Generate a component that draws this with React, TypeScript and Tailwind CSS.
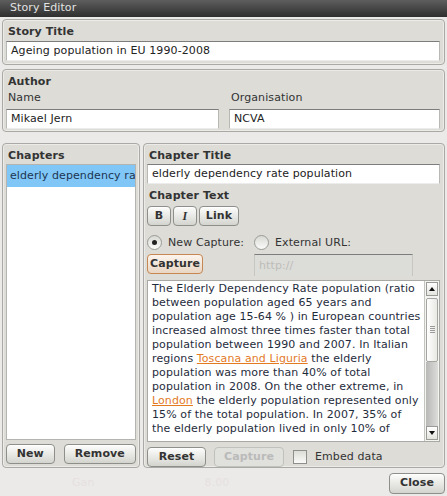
import React from "react";

const btn =
  "h-[20px] rounded-[4px] border border-[#8e8e8a] bg-linear-to-b from-[#fdfdfc] to-[#d4d4cf] text-[11px] font-bold text-[#333] flex items-center justify-center shadow-[inset_0_1px_0_#fff]";

const input =
  "h-[20px] bg-white border border-t-[#7d7d7d] border-x-[#b8b8b4] border-b-[#ececec] px-[4px] flex items-center text-[11px] text-[#222] whitespace-nowrap overflow-hidden";

const panel = "rounded-[4px] border border-[#a9a9a5] bg-[#dddcd7] shadow-[inset_0_0_0_1px_#ecebe7]";

function Radio({ checked }: { checked?: boolean }) {
  return (
    <span className="w-[15px] h-[15px] rounded-full border border-[#9a9a96] bg-linear-to-b from-[#d8d8d4] to-[#fbfbfa] flex items-center justify-center">
      {checked && <span className="w-[5px] h-[5px] rounded-full bg-[#222]" />}
    </span>
  );
}

function Scrollbar() {
  return (
    <div className="w-[15px] h-full flex flex-col border-l border-[#c4c4c0] bg-[#f4f4f2]">
      <div className="h-[14px] mt-[1px] mx-[1px] border border-[#9a9a96] bg-linear-to-b from-white to-[#e4e4e0] flex items-center justify-center">
        <span className="w-0 h-0 border-x-[3px] border-x-transparent border-b-[4px] border-b-[#111]" />
      </div>
      <div className="h-[64px] mx-[1px] mt-[2px] rounded-[2px] border border-[#a4a4a0] bg-linear-to-r from-white to-[#e8e8e4] flex flex-col items-center justify-center gap-[1px]">
        <span className="w-[5px] h-px bg-[#9a9a9a]" />
        <span className="w-[5px] h-px bg-[#9a9a9a]" />
        <span className="w-[5px] h-px bg-[#9a9a9a]" />
        <span className="w-[5px] h-px bg-[#9a9a9a]" />
      </div>
      <div className="flex-1 mx-[1px] bg-linear-to-r from-[#b8b8b6] to-[#dcdcda]" />
      <div className="h-[14px] mb-[1px] mx-[1px] border border-[#9a9a96] bg-linear-to-b from-white to-[#e4e4e0] flex items-center justify-center">
        <span className="w-0 h-0 border-x-[3px] border-x-transparent border-t-[4px] border-t-[#111]" />
      </div>
    </div>
  );
}

const link = "text-[#e37a1f] underline";

export default function App() {
  return (
    <div className="w-[447px] h-[496px] overflow-hidden bg-[#ebeae8] font-['DejaVu_Sans',Verdana,sans-serif] text-[11px] tracking-[0.1px] text-[#333] flex flex-col">
      <div className="h-[17px] shrink-0 pl-[10px] flex items-center bg-linear-to-b from-[#5e5e5e] to-[#2f2f2f] text-[#e2e2e2] text-[11px]">
        Story Editor
      </div>

      <div className="px-[2px] pt-[2px] flex flex-col">
        {/* story title */}
        <div className={`${panel} h-[46px] pt-[5px] pl-[3px] pr-[4px] flex flex-col`}>
          <div className="h-[13px] leading-[13px] font-bold pl-[2px]">Story Title</div>
          <div className={`${input} mt-[3px]`}>Ageing population in EU 1990-2008</div>
        </div>

        {/* author */}
        <div className={`${panel} mt-[4px] h-[63px] pt-[5px] pl-[3px] pr-[4px] flex flex-col`}>
          <div className="h-[13px] leading-[13px] font-bold pl-[2px]">Author</div>
          <div className="flex gap-[10px] mt-[3px]">
            <div className="w-[213px] flex flex-col">
              <div className="h-[13px] leading-[13px] pl-[2px]">Name</div>
              <div className={`${input} mt-[5px]`}>Mikael Jern</div>
            </div>
            <div className="flex-1 flex flex-col">
              <div className="h-[13px] leading-[13px] pl-[2px]">Organisation</div>
              <div className={`${input} mt-[5px]`}>NCVA</div>
            </div>
          </div>
        </div>

        {/* chapters */}
        <div className="mt-[11px] h-[325px] flex gap-[3px]">
          <div className={`${panel} w-[138px] pt-[5px] pl-[3px] pr-[3px] flex flex-col`}>
            <div className="h-[13px] leading-[13px] font-bold pl-[2px]">Chapters</div>
            <div className="mt-[2px] h-[276px] bg-white border border-[#b4b4b0] overflow-hidden">
              <div className="h-[22px] bg-[#80c6f6] pl-[3px] flex items-center text-[#1c3552] whitespace-nowrap overflow-hidden">
                elderly dependency ra
              </div>
            </div>
            <div className="mt-[4px] flex gap-[9px]">
              <div className={`${btn} w-[49px]`}>New</div>
              <div className={`${btn} w-[73px]`}>Remove</div>
            </div>
          </div>

          <div className={`${panel} flex-1 pt-[5px] pl-[3px] pr-[4px] flex flex-col`}>
            <div className="h-[13px] leading-[13px] font-bold pl-[2px]">Chapter Title</div>
            <div className={`${input} mt-[2px]`}>elderly dependency rate population</div>
            <div className="h-[13px] leading-[13px] font-bold pl-[2px] mt-[5px]">Chapter Text</div>
            <div className="mt-[4px] flex gap-[2px]">
              <div className={`${btn} w-[24px] h-[17px]`}>B</div>
              <div className={`${btn} w-[24px] h-[17px]`}>
                <span className="font-['Liberation_Serif',serif] italic text-[12px]">I</span>
              </div>
              <div className={`${btn} w-[40px] h-[17px]`}>Link</div>
            </div>
            <div className="mt-[9px] flex items-center h-[16px]">
              <div className="w-[107px] flex items-center gap-[6px]">
                <Radio checked />
                <span>New Capture:</span>
              </div>
              <div className="flex items-center gap-[6px]">
                <Radio />
                <span>External URL:</span>
              </div>
            </div>
            <div className="mt-[3px] flex h-[22px]">
              <div className="w-[107px]">
                <div className="w-[56px] h-[20px] rounded-[4px] border border-[#c78752] bg-linear-to-b from-[#fcf5ee] to-[#e9d6c4] flex items-center justify-center font-bold text-[#333]">
                  Capture
                </div>
              </div>
              <div className="w-[159px] h-[22px] bg-[#dcdcd8] border-t border-t-[#7d7d7d] border-x border-x-[#c6c6c2] pl-[4px] pt-[3px] text-[#bdbdb9]">
                http://
              </div>
            </div>
            <div className="mt-[4px] h-[163px] bg-white border border-[#a8a8a4] flex overflow-hidden">
              <div className="flex-1 pl-[4px] pt-[1px] leading-[14px] text-[#1f2c3c] whitespace-nowrap overflow-hidden">
                The Elderly Dependency Rate population (ratio<br />
                between population aged 65 years and<br />
                population age 15-64 % ) in European countries<br />
                increased almost three times faster than total<br />
                population between 1990 and 2007. In Italian<br />
                regions <span className={link}>Toscana and Liguria</span> the elderly<br />
                population was more than 40% of total<br />
                population in 2008. On the other extreme, in<br />
                <span className={link}>London</span> the elderly population represented only<br />
                15% of the total population. In 2007, 35% of<br />
                the elderly population lived in only 10% of
              </div>
              <Scrollbar />
            </div>
            <div className="mt-[5px] flex items-center">
              <div className={`${btn} w-[59px]`}>Reset</div>
              <div className="ml-[8px] w-[70px] h-[20px] rounded-[4px] border border-[#c0c0bc] bg-[#e0e0dc] flex items-center justify-center font-bold text-[#bababa]">
                Capture
              </div>
              <span className="ml-[9px] w-[14px] h-[14px] border border-[#8e8e8a] bg-linear-to-b from-[#dcdcd8] to-[#fafaf8]" />
              <span className="ml-[8px]">Embed data</span>
            </div>
          </div>
        </div>

        <div className="mt-[5px] flex items-center">
          <span className="ml-[70px] text-[#e6e0e0]">Gan</span>
          <span className="ml-[110px] text-[#e6e0e0]">8.00</span>
          <div className={`${btn} ml-auto w-[56px] h-[21px]`}>Close</div>
        </div>
      </div>
    </div>
  );
}
